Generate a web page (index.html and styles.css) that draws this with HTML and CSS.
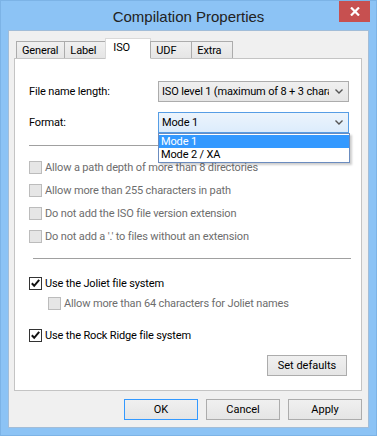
FILE: index.html
```html
<!DOCTYPE html>
<html lang="en">
<head>
<meta charset="UTF-8">
<title>Compilation Properties</title>
<link rel="stylesheet" href="styles.css">
</head>
<body>
<div class="window">
  <div class="titlebar">
    <span class="title">Compilation Properties</span>
    <span class="close">
      <svg width="10" height="9" viewBox="0 0 10 9"><path d="M1 0.5 L9 8.5 M9 0.5 L1 8.5" stroke="#fff" stroke-width="2.2"/></svg>
    </span>
  </div>
  <div class="client">
    <div class="tabs">
      <div class="tab">General</div>
      <div class="tab">Label</div>
      <div class="tab active">ISO</div>
      <div class="tab">UDF</div>
      <div class="tab">Extra</div>
    </div>
    <div class="panel">
      <div class="field">
        <span class="label">File name length:</span>
        <div class="combo">
          <span class="combo-text">ISO level 1 (maximum of 8 + 3 characters)</span>
          <svg class="arrow" width="8" height="5" viewBox="0 0 8 5"><path d="M0.5 0.5 L4 4 L7.5 0.5" fill="none" stroke="#555" stroke-width="1.4"/></svg>
        </div>
      </div>
      <div class="field field2">
        <span class="label">Format:</span>
        <div class="combo open">
          <span class="combo-text">Mode 1</span>
          <svg class="arrow" width="8" height="5" viewBox="0 0 8 5"><path d="M0.5 0.5 L4 4 L7.5 0.5" fill="none" stroke="#555" stroke-width="1.4"/></svg>
          <ul class="droplist">
            <li class="sel">Mode 1</li>
            <li>Mode 2 / XA</li>
          </ul>
        </div>
      </div>
      <div class="sep sep1"></div>

      <div class="checks">
        <label class="check disabled"><span class="box"></span>Allow a path depth of more than 8 directories</label>
        <label class="check disabled"><span class="box"></span>Allow more than 255 characters in path</label>
        <label class="check disabled"><span class="box"></span>Do not add the ISO file version extension</label>
        <label class="check disabled"><span class="box"></span>Do not add a '.' to files without an extension</label>
      </div>

      <div class="sep sep2"></div>

      <label class="check joliet"><span class="box checked"><svg width="11" height="11" viewBox="0 0 11 11"><path d="M1.8 5.2 L4.2 7.8 L9.2 1.8" fill="none" stroke="#111" stroke-width="2"/></svg></span>Use the Joliet file system</label>
      <label class="check disabled sub"><span class="box"></span>Allow more than 64 characters for Joliet names</label>
      <label class="check rock"><span class="box checked"><svg width="11" height="11" viewBox="0 0 11 11"><path d="M1.8 5.2 L4.2 7.8 L9.2 1.8" fill="none" stroke="#111" stroke-width="2"/></svg></span>Use the Rock Ridge file system</label>

      <div class="panel-foot">
        <button class="btn defaults">Set defaults</button>
      </div>
    </div>
    <div class="buttons">
      <button class="btn default">OK</button>
      <button class="btn">Cancel</button>
      <button class="btn">Apply</button>
    </div>
  </div>
</div>
</body>
</html>
```

FILE: styles.css
```css
body {
  margin: 0;
  font-family: Roboto, "Liberation Sans", Arial, sans-serif;
  font-size: 11px;
  letter-spacing: -0.15px;
  color: #000;
}
.window {
  width: 377px; height: 436px;
  box-sizing: border-box;
  background: #8cc3f5;
  border: 1px solid #7cb3e6;
  position: relative;
}
.titlebar {
  height: 29px;
  display: flex; align-items: center; justify-content: center;
}
.title {
  font-family: "Liberation Sans", Arial, sans-serif;
  font-size: 15px; color: #222;
  letter-spacing: 0;
  margin-top: 2px;
}
.close {
  position: absolute; top: 0; right: 6px;
  width: 31px; height: 21px;
  background: #c75050;
  display: flex; align-items: center; justify-content: center;
}
.client {
  margin: 0 7px;
  height: 398px;
  box-sizing: border-box;
  background: #f0f0f0;
  border: 1px solid #a2bdd8;
  padding: 7px 6px 0 5px;
}

/* tabs */
.tabs {
  display: flex; align-items: flex-end;
  height: 21px;
  margin-bottom: -1px;
  padding-left: 2px;
  position: relative; z-index: 1;
}
.tab {
  height: 17px; min-width: 42px; box-sizing: border-box;
  margin-bottom: 1px;
  padding: 1px 5px 0 5px;
  border: 1px solid #acacac; border-bottom: none;
  background: linear-gradient(#f0f0f0, #e5e5e5);
  margin-left: -1px;
  line-height: 15px;
}
.tab:first-child { margin-left: 0; padding-right: 6px; }
.tab.active {
  height: 21px; min-width: 46px; margin-bottom: 0;
  background: #fff;
  border-color: #d9d9d9;
  padding: 0 0 0 7px;
  line-height: 17px;
}

.panel {
  height: 333px; box-sizing: border-box;
  background: #fff;
  border: 1px solid #c4c4c4;
  padding: 22px 12px 0 14px;
  display: flex; flex-direction: column;
}
.field {
  display: flex; align-items: center;
  height: 21px;
}
.field2 { margin-top: 10px; }
.label { width: 129px; }
.combo {
  width: 191px; height: 21px; box-sizing: border-box;
  border: 1px solid #acacac;
  background: linear-gradient(#f0f0f0, #e5e5e5);
  display: flex; align-items: center;
  padding: 0 5px 0 3px;
  position: relative;
}
.combo-text {
  flex: 1; white-space: nowrap; overflow: hidden;
  margin-right: 6px;
}
.combo.open {
  border-color: #569de5;
  background: linear-gradient(#ecf4fc, #dcecfc);
}
.droplist {
  position: absolute; left: -1px; top: 20px;
  width: 192px; box-sizing: border-box;
  margin: 0; padding: 1px 0; list-style: none;
  background: #fff;
  border: 1px solid #6b8cbf;
  box-shadow: 2px 2px 2px rgba(0,0,0,0.2);
  z-index: 2;
}
.droplist li {
  height: 13px; line-height: 13px;
  padding-left: 2px;
}
.droplist li.sel { background: #3399ff; color: #fff; }

.sep { border-top: 1px solid #a0a0a0; }
.sep1 { margin: 12px 0 0 0; }
.sep2 { margin: 14px 0 0 4px; width: 318px; }

.checks {
  display: flex; flex-direction: column; gap: 7px;
  margin-top: 13px;
}
.check {
  display: flex; align-items: center;
  height: 16px; gap: 3px;
}
.check.disabled { color: #6d6d6d; }
.box {
  width: 13px; height: 13px; box-sizing: border-box;
  border: 1px solid #bcbcbc; background: #e6e6e6;
  flex: none;
  display: flex; align-items: center; justify-content: center;
}
.box.checked { border-color: #333; background: #fff; }
.joliet { margin-top: 16px; }
.sub { margin: 4px 0 0 19px; }
.rock { margin-top: 16px; }

.panel-foot {
  display: flex; justify-content: flex-end;
  margin-top: 12px; padding-right: 2px;
}
.btn {
  height: 21px; box-sizing: border-box;
  font: inherit; color: #000;
  border: 1px solid #acacac;
  background: linear-gradient(#f0f0f0, #e5e5e5);
  padding: 0;
}
.defaults { width: 80px; }
.buttons {
  display: flex; justify-content: flex-end; gap: 8px;
  margin-top: 8px;
}
.buttons .btn { width: 74px; }
.btn.default { border-color: #3399ff; }
```
